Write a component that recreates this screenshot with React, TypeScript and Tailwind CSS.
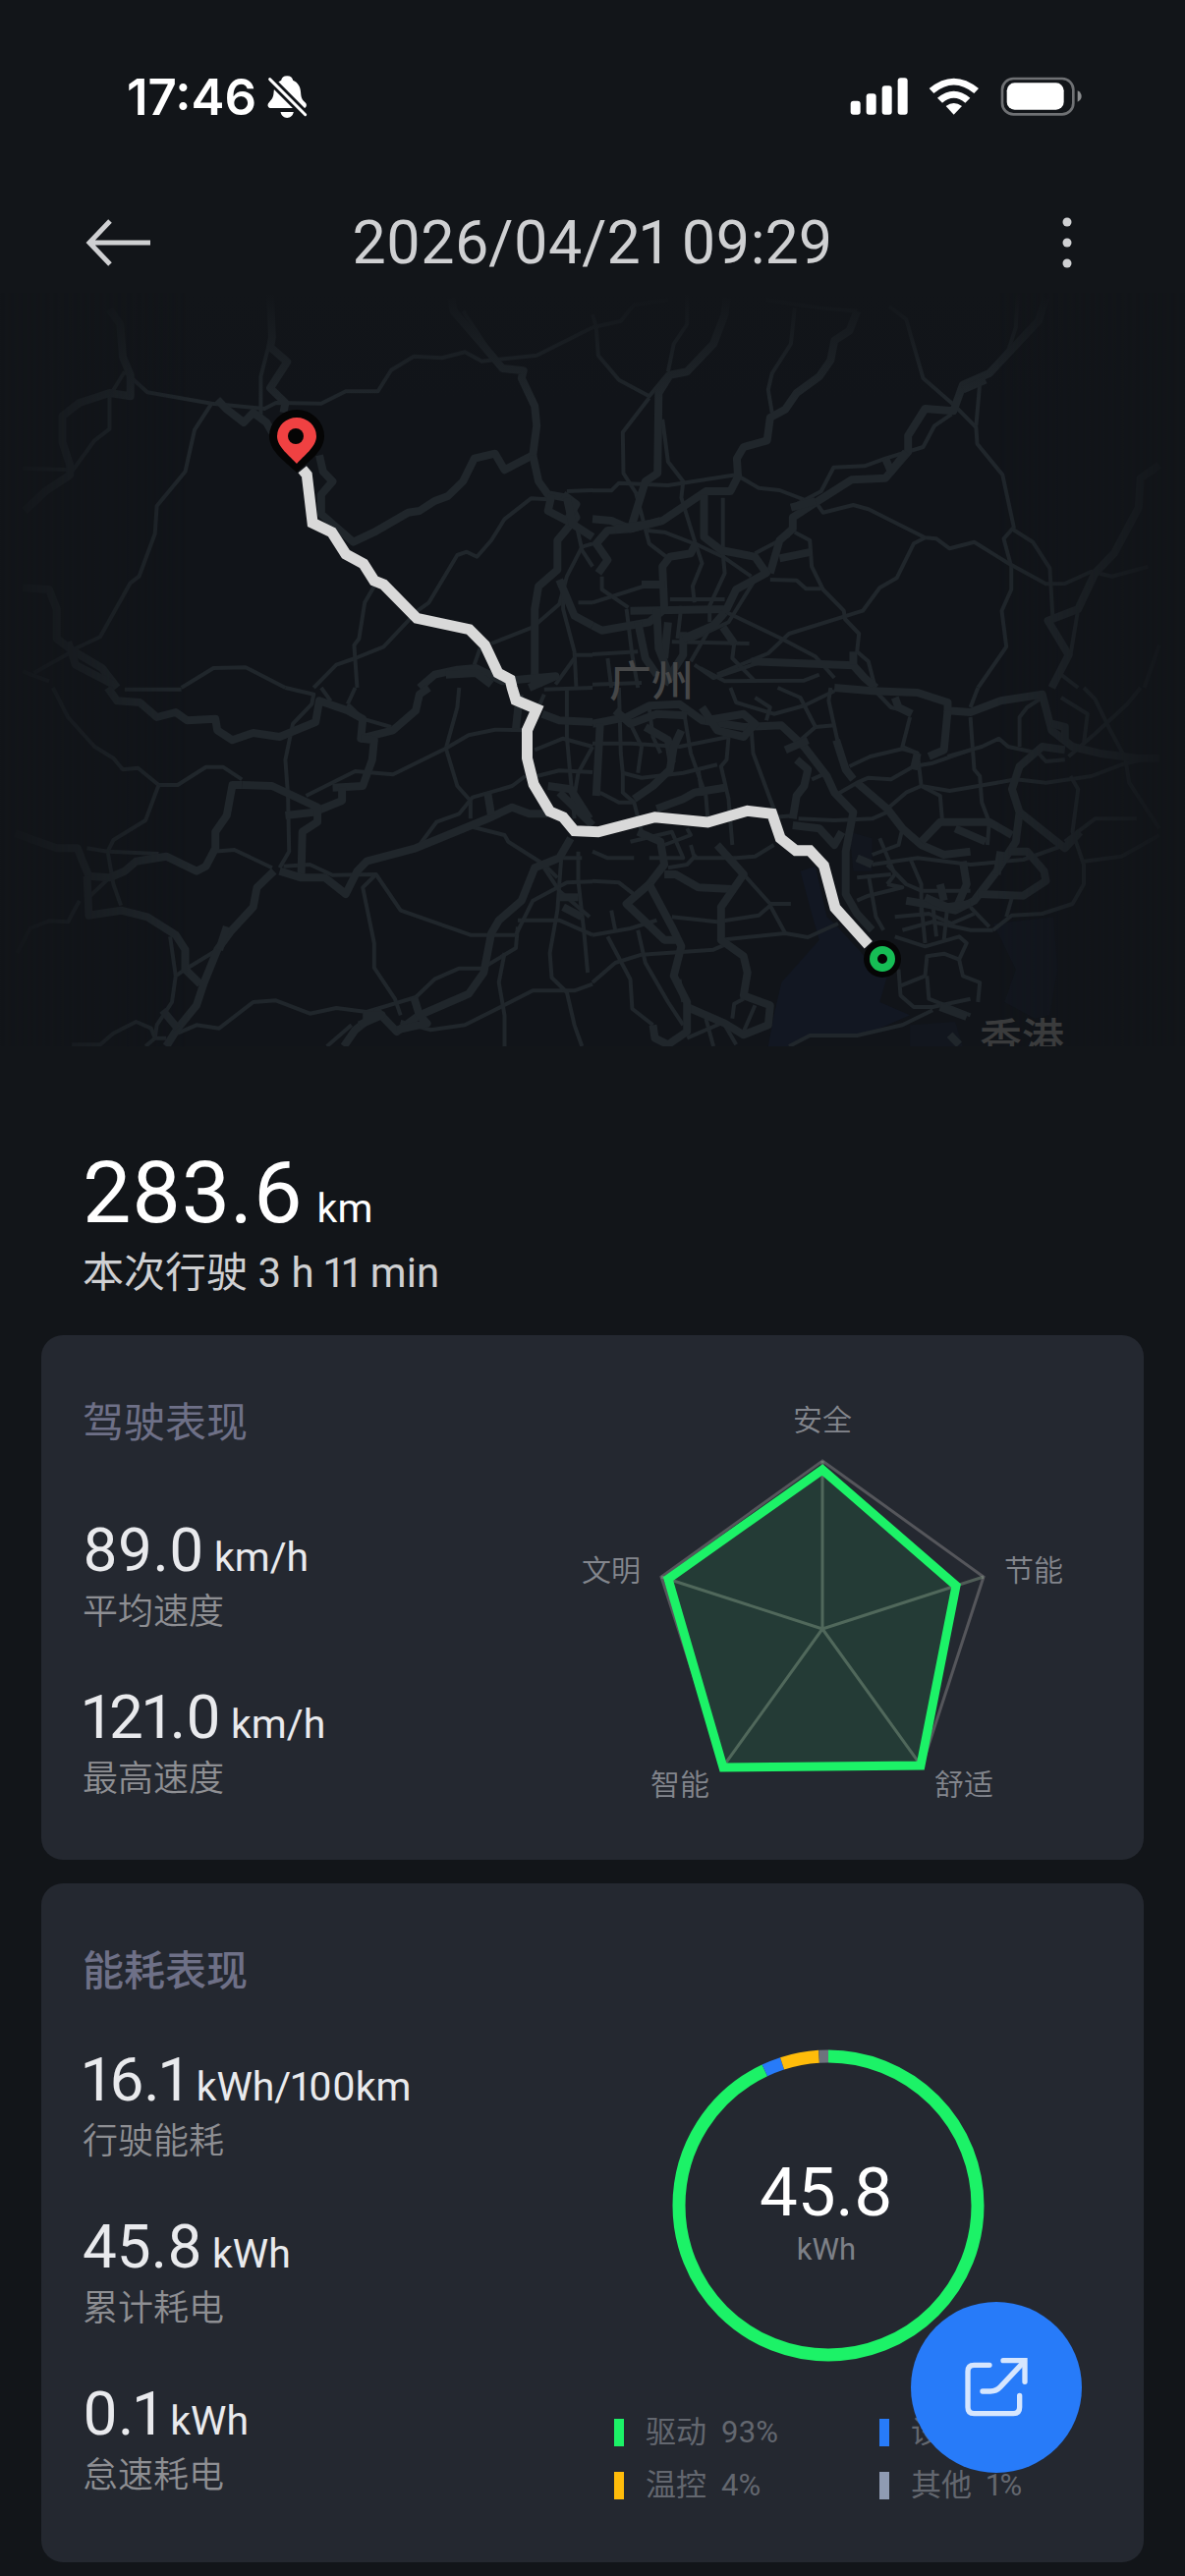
import type { ReactNode } from "react";

type Tile = { x: number; y: number; major: string[]; minor: string[] };

/* Road geometry is stored per map tile, in tile units, and projected onto the map. */
const TILES: Tile[] = [
  {
    x: 0,
    y: 300,
    major: [
      "290,45 318,90 325,190 345,245 345,310 290,300 210,330 165,370 165,450 185,520 185,550 120,600 65,660",
      "715,0 720,130 715,160 760,205 715,285 755,330 750,360",
      "575,320 600,350 645,390 670,360 705,390 720,420",
      "845,490 855,540 880,570 850,610 850,670 890,710 935,755 990,725 1080,665 1110,660 1150,630 1185,615 1225,570 1255,500 1310,485 1335,535 1410,490 1420,400 1415,340 1380,255 1385,232 1330,225 1275,150 1200,50 1195,10",
      "1410,490 1425,570 1450,610 1500,620 1525,680 1475,750 1475,840 1425,890 1415,960 1415,1160 1440,1190",
      "1460,610 1450,660 1500,690 1525,640 1490,610",
      "1500,620 1515,700 1568,740",
      "60,895 130,900 150,960 150,1050 190,1085 270,1140 310,1200",
      "180,1060 200,1130 300,1190",
      "1110,1200 1150,1160 1210,1145 1260,1140 1330,1180 1470,1165 1400,1200",
      "1180,1160 1260,1155 1300,1190",
      "1480,870 1520,980 1568,1010",
    ],
    minor: [
      "330,235 390,298 560,332 700,348 730,330 850,332 915,295 1000,295 1035,230 1095,188 1170,193 1230,175 1275,203 1420,185 1568,100",
      "560,332 515,412 490,540 415,645 410,730 368,860 345,880 265,1045 190,1085",
      "330,235 290,310 290,410 250,445 190,540",
      "710,160 690,250 690,370",
      "1225,50 1300,180",
      "1500,600 1568,597",
      "1450,625 1405,622 1335,685 1300,750 1262,800 1235,785 1210,795 1135,940 1105,965 1015,1075 940,1110 890,1130 830,1200",
      "990,890 965,940 950,1050 937,1070 945,1200",
      "480,1200 565,1140 650,1138 755,1200",
      "190,1090 90,1155",
      "60,530 190,535",
      "60,1150 130,1180",
      "1300,1065 1410,1015 1480,945 1500,860 1540,770 1568,760",
      "1525,700 1540,780 1568,830",
      "1490,870 1490,960 1520,1090 1525,1200",
      "1520,1100 1568,1100",
      "1530,940 1568,940",
      "1270,1080 1255,1130",
      "1520,1110 1470,1190",
    ],
  },
  {
    x: 603,
    y: 300,
    major: [
      "355,10 350,60 320,150 250,235 205,245 175,300 172,545 140,570 105,700",
      "700,50 680,110 640,140 630,200 600,250 540,300 510,350 470,375 462,445 400,465 382,500 385,555 365,600 300,600 185,690 100,715 40,720 10,760 40,810 15,850",
      "1200,10 1180,80 1050,240 980,275 955,355 880,348 835,430 835,480 775,560 685,565 590,635 530,680 530,715 495,750 470,850",
      "1500,520 1450,560 1445,650 1380,790 1330,850 1285,960 1205,995 1260,1100 1215,1200",
      "0,685 50,690 100,715 180,690",
      "295,610 295,740 340,780 430,800 460,850 380,900 355,960 100,965",
      "0,1010 25,1025 150,1000 190,960 185,830 205,800 260,790 275,755",
      "495,805 580,785",
      "420,1120 690,1132 720,1170 750,1200",
      "690,1130 690,1090",
      "120,1000 140,1110 170,1160",
      "200,1000 190,1110",
      "170,960 175,1080 210,1180",
      "240,1030 240,1100 190,1190",
      "345,1015 375,1065",
      "350,970 320,1010 240,1050",
      "130,885 190,885",
      "775,500 790,540 830,480",
      "525,650 590,630",
      "60,715 150,700",
      "980,290 1040,260",
    ],
    minor: [
      "0,60 10,100 15,185 70,260 150,310 200,240",
      "0,100 75,80 110,30 200,15",
      "250,0 250,90 215,150 200,235",
      "150,315 80,420 82,545 115,605 150,760 195,800",
      "185,380 200,510 240,570 235,620 270,750 290,820 265,890 270,940",
      "0,598 50,598 70,575 200,582 380,550 440,590 495,597 570,630",
      "535,40 525,150 475,240 465,290 475,360",
      "460,15 600,40 700,50",
      "785,35 830,75 875,255 955,335 1015,405 1018,455 1085,550 1115,710 1088,745 1108,830 1108,900 1083,965 1095,1075 1020,1200",
      "1125,0 1120,100 1100,170",
      "1025,270 1015,400",
      "950,365 905,400 875,465 775,500 720,523 638,527 605,600 540,640",
      "595,640 610,665 690,642 730,655 880,742 910,745 945,775 1010,755 1100,820 1200,883 1250,882 1320,845 1375,860 1470,830",
      "880,742 850,760 805,865 760,895 715,965 520,1035 465,1095 330,1160",
      "1110,715 1165,755 1210,835 1218,990",
      "1285,960 1265,1100",
      "1240,1160 1285,1200",
      "145,720 190,725 280,765 345,800 420,860",
      "345,620 345,790 350,850 310,950 310,1000",
      "535,725 575,750 580,830 610,900 665,965 668,990 705,1035 700,1090 730,1120 748,1200",
      "470,870 540,872 565,898 605,898",
      "430,790 520,735",
      "355,970 500,1050 590,1105 640,1170",
      "430,870 360,1000 250,1060",
      "0,940 150,885",
      "0,1098 120,1090",
      "90,960 105,1100 120,1200",
      "25,860 25,900 95,955",
      "210,1060 415,1065",
      "205,930 350,930",
      "235,950 225,1050",
      "375,1065 370,1110 430,1180",
      "285,1140 350,1180 560,1178 600,1160",
      "270,1130 320,1170 450,1120",
      "310,1020 260,1120",
      "40,1110 50,1200",
      "0,1190 130,1185",
      "1500,1070 1460,1200",
    ],
  },
  {
    x: 0,
    y: 700,
    major: [
      "285,0 310,40 370,45 415,90 465,75 495,100 570,95 575,130 615,160 670,138 740,150 835,105 845,40 920,70 960,95 955,155 1040,130 1100,70 1110,20 1135,0",
      "955,155 990,160 985,220 960,300 880,305",
      "905,305 905,345 830,380 755,390",
      "640,297 615,297 600,390 570,440 570,490 545,545 520,560 440,515 360,530 330,560 290,580 235,575 215,520 205,490 150,490 40,445",
      "640,297 720,300 840,365 840,410 800,440 797,580",
      "740,560 797,580 860,580 915,630 945,560 970,530 1100,490 1300,395 1355,365 1400,385 1450,385",
      "1290,320 1300,390",
      "725,560 680,610 670,670 610,745 575,800 540,900 520,970 470,1040 440,1095",
      "600,730 580,800",
      "230,575 235,695 320,680 390,700 465,755 490,800 490,860 530,905",
      "430,985 470,1040",
      "910,1095 940,1045 1000,990 1050,1050 1110,1000 1240,935 1280,870 1300,750 1320,710 1380,650 1415,550 1480,520 1510,460",
      "960,1000 1010,1000 950,1030",
      "1095,945 1110,1000 1130,1025 1050,1045",
      "1480,640 1530,640",
      "1490,670 1540,700",
      "1435,80 1480,100 1568,105",
      "1450,300 1510,310 1560,400",
      "1480,320 1568,420",
      "1365,125 1375,20",
    ],
    minor: [
      "140,0 180,90 250,180 300,215 325,250 365,245 420,297 470,297 545,242 590,242 640,280",
      "330,5 480,5",
      "420,297 385,405 300,465 285,500 420,507",
      "230,490 285,500 300,600 320,665",
      "235,640 290,580",
      "755,0 830,20 825,50 775,110 755,220 762,330 765,500 740,550",
      "850,0 875,40",
      "920,50 960,95 1035,120",
      "920,50 940,0",
      "1215,0 1210,60 1180,185 1210,300 1245,345 1245,400",
      "810,330 940,255 1040,265 1180,185 1240,145 1310,128 1395,130",
      "1390,270 1355,300 1250,335 1215,385 1155,410 1110,480",
      "1250,425 1335,450 1345,470 1440,540 1475,580",
      "565,500 620,495 720,550",
      "750,545 820,540 880,572 995,570 1060,680 1245,755 1365,755",
      "995,570 960,610 990,780 990,855 1045,950 1060,1000",
      "575,800 490,860 465,880 455,960 415,1030 410,1070 385,1095",
      "450,760 465,880",
      "210,650 180,715 130,712 80,735 45,810",
      "190,1090 265,1090 300,1055 360,1020 400,1040 410,1070 440,1070",
      "470,1055 520,1030 580,1040 670,960 730,955 820,995 890,978 970,990 1100,945 1150,890 1215,857 1275,857 1365,795 1370,730",
      "865,1095 930,1030",
      "1060,1020 1140,1045 1230,1030 1410,925 1520,925 1568,905",
      "1335,810 1320,900 1335,1000 1335,1095",
      "1485,520 1475,680 1455,810 1460,885 1500,930 1520,1030 1540,1095",
      "1530,500 1530,590 1545,740 1555,870",
      "1370,710 1480,710 1568,755",
      "1365,755 1410,650 1500,595 1568,592",
      "1440,550 1480,620 1560,700",
      "1485,520 1540,520",
      "1415,190 1490,155 1568,180",
      "1500,0 1500,150 1510,280 1520,400",
      "1568,180 1530,260 1520,330",
      "1420,270 1480,253 1568,258",
      "1440,5 1568,0",
      "1440,20 1425,60",
    ],
  },
  {
    x: 603,
    y: 700,
    major: [
      "0,110 90,90 150,55 230,50 290,100 400,120 500,115 560,180 620,270 640,320 690,380 670,500 670,630 700,690 740,740",
      "60,70 100,110 170,80 250,85",
      "140,120 200,160 210,230",
      "20,110 10,330",
      "290,60 330,130 400,150 430,110 400,80 300,100",
      "640,0 740,10 860,15 940,45 940,70 1000,75 1080,40 1190,20 1215,130 1270,180 1340,200 1440,215 1500,215",
      "1215,110 1250,120 1250,160",
      "800,30 810,60 845,80",
      "940,70 930,190 890,210",
      "1250,190 1190,180 1130,240 1110,310 1130,380 1120,470 1070,560 1010,650 960,680 880,660 830,650",
      "1130,380 1250,490 1290,440",
      "700,290 780,370 820,430 870,480 930,510 1000,500",
      "870,470 920,410 1050,410 1110,450",
      "960,430 1040,470",
      "110,340 160,300 205,250 215,180 235,130",
      "170,370 240,340 270,320 350,305",
      "120,440 180,470 190,540 150,600 90,660 190,770 230,770",
      "190,570 220,570 280,610 370,615",
      "330,480 400,570 340,670 340,770 400,820 410,870 400,940 470,970 465,1030 400,1060 350,1025 250,975",
      "150,600 210,730 235,790 215,880 250,960 250,1050 200,1090 165,1070 160,1030",
      "920,975 990,1005",
      "945,1060 970,1090",
      "980,530 990,600 960,680",
      "880,640 940,670 1000,660",
      "1100,500 1150,500 1195,560 1200,590 1140,635 1020,630",
      "1080,500 1070,570",
      "920,600 930,650",
      "700,520 740,540",
      "530,420 600,430 640,480 660,440",
      "510,190 570,160",
      "540,220 570,250 560,300 540,330 530,400",
      "645,160 670,250 690,280",
      "860,200 850,250",
    ],
    minor: [
      "365,0 380,45 480,80 560,55 640,10",
      "430,30 470,60 460,100",
      "490,0 550,30 590,120 640,115",
      "590,120 520,190",
      "630,0 625,40 650,170 670,250",
      "840,90 820,180 860,200",
      "740,0 790,60 845,75",
      "1000,90 1010,250 1025,270 1030,350 1050,410 1045,480",
      "1020,0 1000,60",
      "1130,180 1130,90 1150,60 1190,30",
      "680,240 735,210 770,200 820,187 860,200 870,300 945,315 1070,290 1120,280 1200,290 1320,270 1400,235 1470,215",
      "640,330 700,290 730,275 790,280 850,240 900,230 1000,190",
      "870,300 830,320 780,370",
      "870,300 920,330 925,400",
      "940,210 1030,180 1075,155 1100,180 1180,200 1200,225 1250,220",
      "1300,0 1330,35 1370,130 1410,215 1420,290 1500,430",
      "1450,0 1415,50 1330,140 1260,210",
      "1240,30 1310,80 1300,170",
      "1265,270 1285,310 1270,440 1300,540 1300,600 1270,660 1190,690 1110,695 1060,740",
      "1250,470 1330,400 1440,400",
      "1300,530 1400,515 1500,450",
      "545,400 640,405 740,400 780,380",
      "580,280 620,260",
      "480,395 540,390",
      "420,120 425,200 470,340 480,370",
      "240,60 260,200 300,330 305,400",
      "150,60 160,150 180,200",
      "100,110 130,180 120,260",
      "360,150 355,220 340,240 360,340 370,480",
      "280,250 290,330",
      "70,0 75,200 80,260 130,275 240,260 330,235",
      "0,170 100,170 230,180 360,150",
      "20,320 70,350 110,350",
      "80,260 80,320 110,350 130,440",
      "0,500 40,520 110,520",
      "0,590 70,595 120,640",
      "100,470 210,440 240,520 150,520",
      "260,480 270,520 380,520 430,515 480,480",
      "190,480 260,450 250,430",
      "200,550 250,540 275,510",
      "400,570 470,660 525,660",
      "210,700 330,715 440,695 470,665 510,750",
      "0,755 100,735 170,710",
      "50,680 60,740",
      "340,770 510,750 570,762 650,720",
      "0,900 60,840 130,815 320,800 350,785",
      "40,760 100,890 105,980 160,1030",
      "120,740 140,840 200,960 240,1030",
      "230,890 240,960",
      "400,950 375,965 370,1010",
      "430,970 400,1050",
      "300,1010 320,1095",
      "350,1030 380,1090",
      "250,1070 350,1020",
      "520,1095 575,1062 700,1062 820,1030 900,985",
      "810,860 815,940 850,975 900,975 1000,950",
      "815,910 880,880 885,820 930,812 970,830 980,880 1025,900 1020,960",
      "885,880 890,950 1000,1000",
      "970,830 990,780 970,760 880,790 800,760",
      "700,650 730,635 820,610 780,600",
      "730,570 750,700 770,740",
      "700,580 790,570",
      "820,740 900,715 1000,740 1060,740",
      "800,700 890,690 950,720 1010,690",
      "900,660 910,760",
      "940,660 930,770",
      "870,660 880,780",
      "780,540 830,600 870,620 1000,620",
      "840,520 870,600 870,700",
      "760,460 800,570 780,600",
      "740,540 860,520 1000,540 1140,525 1250,480",
      "780,370 820,430 810,480 740,510",
      "1110,640 1095,700",
      "1000,670 1050,730",
    ],
  },
];

/* One tile unit, in map pixels. */
const UNIT_X = 1 / 2.6;
const UNIT_Y = 1 / 3;

const project = (points: string, tile: { x: number; y: number }) =>
  points
    .split(" ")
    .map((pair) => {
      const [px, py] = pair.split(",").map(Number);
      return `${(tile.x + px * UNIT_X).toFixed(1)},${(tile.y + py * UNIT_Y).toFixed(1)}`;
    })
    .join(" ");

const NW = TILES[0];
const SW = TILES[2];
const SE = TILES[3];

const ROUTE = [
  project("800,533 812,550 827,697 878,725 915,792 962,822 990,873 1015,885 1103,988 1242,1022 1283,1070 1318,1155 1350,1175", NW),
  project("1355,0 1365,38 1420,65 1395,130 1395,215 1412,295 1455,378 1490,395 1520,437", SW),
  project("15,440 165,395 305,411 410,376 475,385 497,460 538,497 575,497 612,543 642,672 730,785", SE),
].join(" ");

function RouteMap() {
  return (
    <svg viewBox="0 298 1206 846" className="block w-full" role="img" aria-label="行驶路线">
      <defs>
        <linearGradient id="fadeX" x1="0" x2="1" y1="0" y2="0">
          <stop offset="0" stopColor="#000" />
          <stop offset="0.16" stopColor="#fff" />
          <stop offset="0.84" stopColor="#fff" />
          <stop offset="1" stopColor="#000" />
        </linearGradient>
        <linearGradient id="fadeY" x1="0" x2="0" y1="0" y2="1">
          <stop offset="0" stopColor="#121519" />
          <stop offset="1" stopColor="#121519" stopOpacity="0" />
        </linearGradient>
        <mask id="edges">
          <rect x="0" y="298" width="1206" height="767" fill="url(#fadeX)" />
        </mask>
        <clipPath id="frame">
          <rect x="0" y="298" width="1206" height="767" />
        </clipPath>
      </defs>
      <g mask="url(#edges)">
        <rect x="0" y="298" width="1206" height="767" fill="#111419" />
        <polygon
          points={project("550,560 590,545 620,700 640,720 720,820 780,880 760,960 840,1000 760,1040 700,1060 580,1062 520,1095 465,1095 480,1000 500,900 600,770 580,690", SE)}
          fill="#121722"
        />
        <g fill="#12161e">
          <polygon points={project("1060,720 1220,700 1230,860 1210,1000 1170,1010 1090,960 1120,860", SE)} />
          <polygon points={project("680,440 740,460 740,560 690,560", SE)} />
          <polygon points={project("840,1030 960,1020 980,1095 840,1095", SE)} />
        </g>
        <g fill="none" stroke="#20262b" strokeLinejoin="round">
          {TILES.map((tile) => (
            <g key={`${tile.x}-${tile.y}`}>
              {tile.minor.map((road) => (
                <polyline key={road} points={project(road, tile)} strokeWidth="4" />
              ))}
              {tile.major.map((road) => (
                <polyline key={road} points={project(road, tile)} strokeWidth="8" />
              ))}
            </g>
          ))}
        </g>
        <rect x="0" y="298" width="1206" height="110" fill="url(#fadeY)" />
      </g>
      <g clipPath="url(#frame)" fontSize="43" fontWeight="500" fontFamily="'Noto Sans CJK SC', sans-serif">
        <text x="663" y="709" textAnchor="middle" fill="#464748">广州</text>
        <text x="1040" y="1073" textAnchor="middle" fill="#3a3b3c">香港</text>
      </g>
      <polyline points={ROUTE} fill="none" stroke="#d9d9d9" strokeWidth="11" strokeLinejoin="miter" />
      <path d="M302 481 C292 471 274 460 274 444 A28 27 0 0 1 330 444 C330 460 312 471 302 481Z" fill="#050505" />
      <path d="M302 472 C295 464 282 455 282 444 A20 19 0 0 1 322 444 C322 455 309 464 302 472Z" fill="#f04142" />
      <circle cx="301" cy="444" r="8" fill="#050505" />
      <circle cx="898" cy="976" r="19" fill="#050505" />
      <circle cx="898" cy="976" r="9" fill="none" stroke="#16bd55" strokeWidth="8" />
    </svg>
  );
}

function StatusBar() {
  return (
    <div className="flex h-[196px] items-center justify-between pr-[104px] pl-[129px]">
      <div className="flex items-center gap-[10px]">
        <span className="font-[Inter] text-[51px] leading-none font-semibold text-white">17:46</span>
        <svg viewBox="455 45 130 140" className="h-[47px] w-[43px]" aria-hidden="true">
          <path
            d="M519 51 C530 51 536 57 537 64 C553 71 560 84 561 101 C562 118 565 125 576 134 C581 139 579 150 570 150 H470 C459 150 457 139 463 133 C474 122 477 116 478 101 C479 84 486 71 501 64 C502 57 508 51 519 51Z"
            fill="#fff"
          />
          <path d="M499 162 H539 C537 173 529 180 519 180 C509 180 501 173 499 162Z" fill="#fff" />
          <path d="M466 61 L575 170" stroke="#121519" strokeWidth="26" />
          <path d="M466 61 L575 170" stroke="#fff" strokeWidth="9" strokeLinecap="round" />
        </svg>
      </div>
      <div className="flex items-center gap-[21px]">
        <svg viewBox="43 52 177 120" className="h-10 w-[59px]" fill="#fff" aria-hidden="true">
          <rect x="45" y="126" width="30" height="42" rx="9" />
          <rect x="93" y="104" width="30" height="64" rx="9" />
          <rect x="141" y="80" width="30" height="88" rx="9" />
          <rect x="189" y="56" width="30" height="112" rx="9" />
        </svg>
        <svg viewBox="284 52 156 120" className="h-10 w-[52px]" fill="#fff" aria-hidden="true">
          <path d="M286 88 Q361 26 437 88 L423 103 Q361 52 300 103Z" />
          <path d="M311 117 Q361 75 411 117 L396 132 Q361 103 326 132Z" />
          <path d="M337 142 Q361 124 386 142 L361 168Z" />
        </svg>
        <svg viewBox="502 52 252 120" className="h-10 w-[84px]" aria-hidden="true">
          <rect x="508" y="58" width="217" height="109" rx="34" fill="none" stroke="#6f7174" strokeWidth="8" />
          <rect x="522" y="71" width="174" height="82" rx="24" fill="#fff" />
          <path d="M738 95 Q750 101 750 112 Q750 123 738 129Z" fill="#8a8c8e" />
        </svg>
      </div>
    </div>
  );
}

function Header() {
  return (
    <header className="flex h-[102px] items-center justify-between px-[86px] text-[#cfd0d2]">
      <button type="button" aria-label="返回" className="flex h-16 w-[70px] items-center">
        <svg viewBox="0 0 70 48" className="h-12 w-[70px]" fill="none" stroke="currentColor" strokeWidth="5">
          <path d="M26 2 L5 24 L26 46 M5 24 H67" />
        </svg>
      </button>
      <h1 className="text-[61px] leading-none font-normal">2026/04/21 09:29</h1>
      <button type="button" aria-label="更多" className="flex h-16 w-[70px] items-center justify-end pr-5">
        <svg viewBox="0 0 20 54" className="h-[54px] w-5" fill="currentColor">
          <circle cx="6" cy="6" r="4.5" />
          <circle cx="6" cy="27" r="4.5" />
          <circle cx="6" cy="48" r="4.5" />
        </svg>
      </button>
    </header>
  );
}

function Metric({ value, unit, label }: { value: string; unit: string; label: string }) {
  return (
    <div>
      <dd className="flex items-baseline gap-[10px] text-[#e9eaed]">
        <span className="text-[62px] leading-[66px]">{value}</span>
        <span className="text-[41px] leading-none">{unit}</span>
      </dd>
      <dt className="mt-2 text-4xl leading-[44px] font-[350] text-[#8e8f93]">{label}</dt>
    </div>
  );
}

function Card({ title, bold, children }: { title: string; bold?: boolean; children: ReactNode }) {
  return (
    <section className="rounded-[22px] bg-[#242830] px-[42px] pt-[66px] pb-[60px]">
      <h2 className={bold ? "text-[42px] leading-[48px] font-medium text-[#6e7087]" : "text-[42px] leading-[48px] font-normal text-[#6e7087]"}>{title}</h2>
      {children}
    </section>
  );
}

function Radar() {
  return (
    <svg viewBox="583 1420 520 420" className="h-[420px] w-[520px] shrink-0" role="img" aria-label="驾驶表现雷达图">
      <polygon points="837,1487 1001,1605 938,1798 736,1798 673,1605" fill="none" stroke="#55565b" strokeWidth="3" />
      <polygon points="837,1496 973,1614 937,1797 736,1799 680,1607" fill="#243b36" />
      <path d="M837 1658 V1487 M837 1658 L1001 1605 M837 1658 L938 1798 M837 1658 L736 1798 M837 1658 L673 1605" fill="none" stroke="#8fa890" strokeOpacity="0.42" strokeWidth="3" />
      <polygon points="837,1496 973,1614 937,1797 736,1799 680,1607" fill="none" stroke="#1cf267" strokeWidth="9" />
      <g fontSize="30" fill="#83868d" textAnchor="middle" fontFamily="'Noto Sans CJK SC', sans-serif" fontWeight="350">
        <text x="837" y="1456">安全</text>
        <text x="1052" y="1609">节能</text>
        <text x="981" y="1827">舒适</text>
        <text x="692" y="1827">智能</text>
        <text x="622" y="1609">文明</text>
      </g>
    </svg>
  );
}

const USAGE = [
  { label: "驱动", percent: 93, start: 0, stroke: "#1cf267", swatch: "bg-[#1cf267]" },
  { label: "设备", percent: 2, start: 93, stroke: "#277bf9", swatch: "bg-[#277bf9]" },
  { label: "温控", percent: 4, start: 95, stroke: "#ffbc0a", swatch: "bg-[#ffbc0a]" },
  { label: "其他", percent: 1, start: 99, stroke: "#6d727d", swatch: "bg-[#8f9bb3]" },
];

function Donut() {
  return (
    <svg viewBox="0 0 318 318" className="h-[318px] w-[318px]" role="img" aria-label="累计耗电 45.8 kWh">
      <g fill="none" strokeWidth="13" transform="rotate(-90 159 159)">
        {USAGE.map((part) => (
          <circle
            key={part.label}
            cx="159"
            cy="159"
            r="152"
            pathLength={100}
            stroke={part.stroke}
            strokeDasharray={`${part.percent} ${100 - part.percent}`}
            strokeDashoffset={-part.start}
          />
        ))}
      </g>
      <g textAnchor="middle" fontFamily="Roboto, sans-serif">
        <text x="157" y="169" fontSize="69" fill="#fff">45.8</text>
        <text x="157" y="214" fontSize="31" fill="#7d8087">kWh</text>
      </g>
    </svg>
  );
}

export default function App() {
  return (
    <div className="min-h-screen bg-[#121519] font-[Roboto,'Noto_Sans_CJK_SC',sans-serif] text-white proportional-nums">
      <StatusBar />
      <Header />
      <main>
        <RouteMap />
        <div className="px-[84px] pt-[17px]">
          <p className="flex items-baseline gap-[15px]">
            <span className="text-[88px] leading-[106px]">283.6</span>
            <span className="text-[41px] leading-none">km</span>
          </p>
          <p className="mt-[5px] text-[42px] leading-[48px] text-[#cfd0d2]">本次行驶 3 h 11 min</p>
        </div>
        <div className="flex flex-col gap-6 px-[42px] pt-[39px] pb-[13px]">
          <Card title="驾驶表现">
            <div className="flex justify-between">
              <dl className="flex flex-col gap-[52px] pt-[72px]">
                <Metric value="89.0" unit="km/h" label="平均速度" />
                <Metric value="121.0" unit="km/h" label="最高速度" />
              </dl>
              <div className="-mt-[53px] mr-[19px] -mb-[9px]">
                <Radar />
              </div>
            </div>
          </Card>
          <Card title="能耗表现" bold>
            <div className="flex justify-between">
              <dl className="flex flex-col gap-[52px] pt-[53px]">
                <Metric value="16.1" unit="kWh/100km" label="行驶能耗" />
                <Metric value="45.8" unit="kWh" label="累计耗电" />
                <Metric value="0.1" unit="kWh" label="怠速耗电" />
              </dl>
              <div className="mr-[19px] flex w-[520px] flex-col items-center pt-[55px]">
                <Donut />
                <ul className="grid w-full grid-cols-[270px_auto] gap-y-[18px] pt-[54px] pl-[42px] text-[31px] leading-9 text-[#63676f]">
                  {USAGE.map((part) => (
                    <li key={part.label} className="flex items-center">
                      <span className={`mr-[22px] h-7 w-[10px] ${part.swatch}`} />
                      <span className="mr-[15px]">{part.label}</span>
                      <span>{part.percent}%</span>
                    </li>
                  ))}
                </ul>
              </div>
            </div>
          </Card>
        </div>
      </main>
      <button type="button" aria-label="分享" className="fixed right-[105px] bottom-[105px] flex h-[174px] w-[174px] items-center justify-center rounded-full bg-[#277bf9]">
        <svg viewBox="64 79 198 192" className="h-16 w-[66px]" fill="none" stroke="#d6e6fe" strokeWidth="16" strokeLinecap="round" aria-hidden="true">
          <path d="M142 107 H95 Q76 107 76 126 V236 Q76 255 95 255 H215 Q234 255 234 236 V200" />
          <path d="M184 93 H250 V158" />
          <path d="M121 187 H145 Q163 187 175 174 L246 98" />
        </svg>
      </button>
    </div>
  );
}
